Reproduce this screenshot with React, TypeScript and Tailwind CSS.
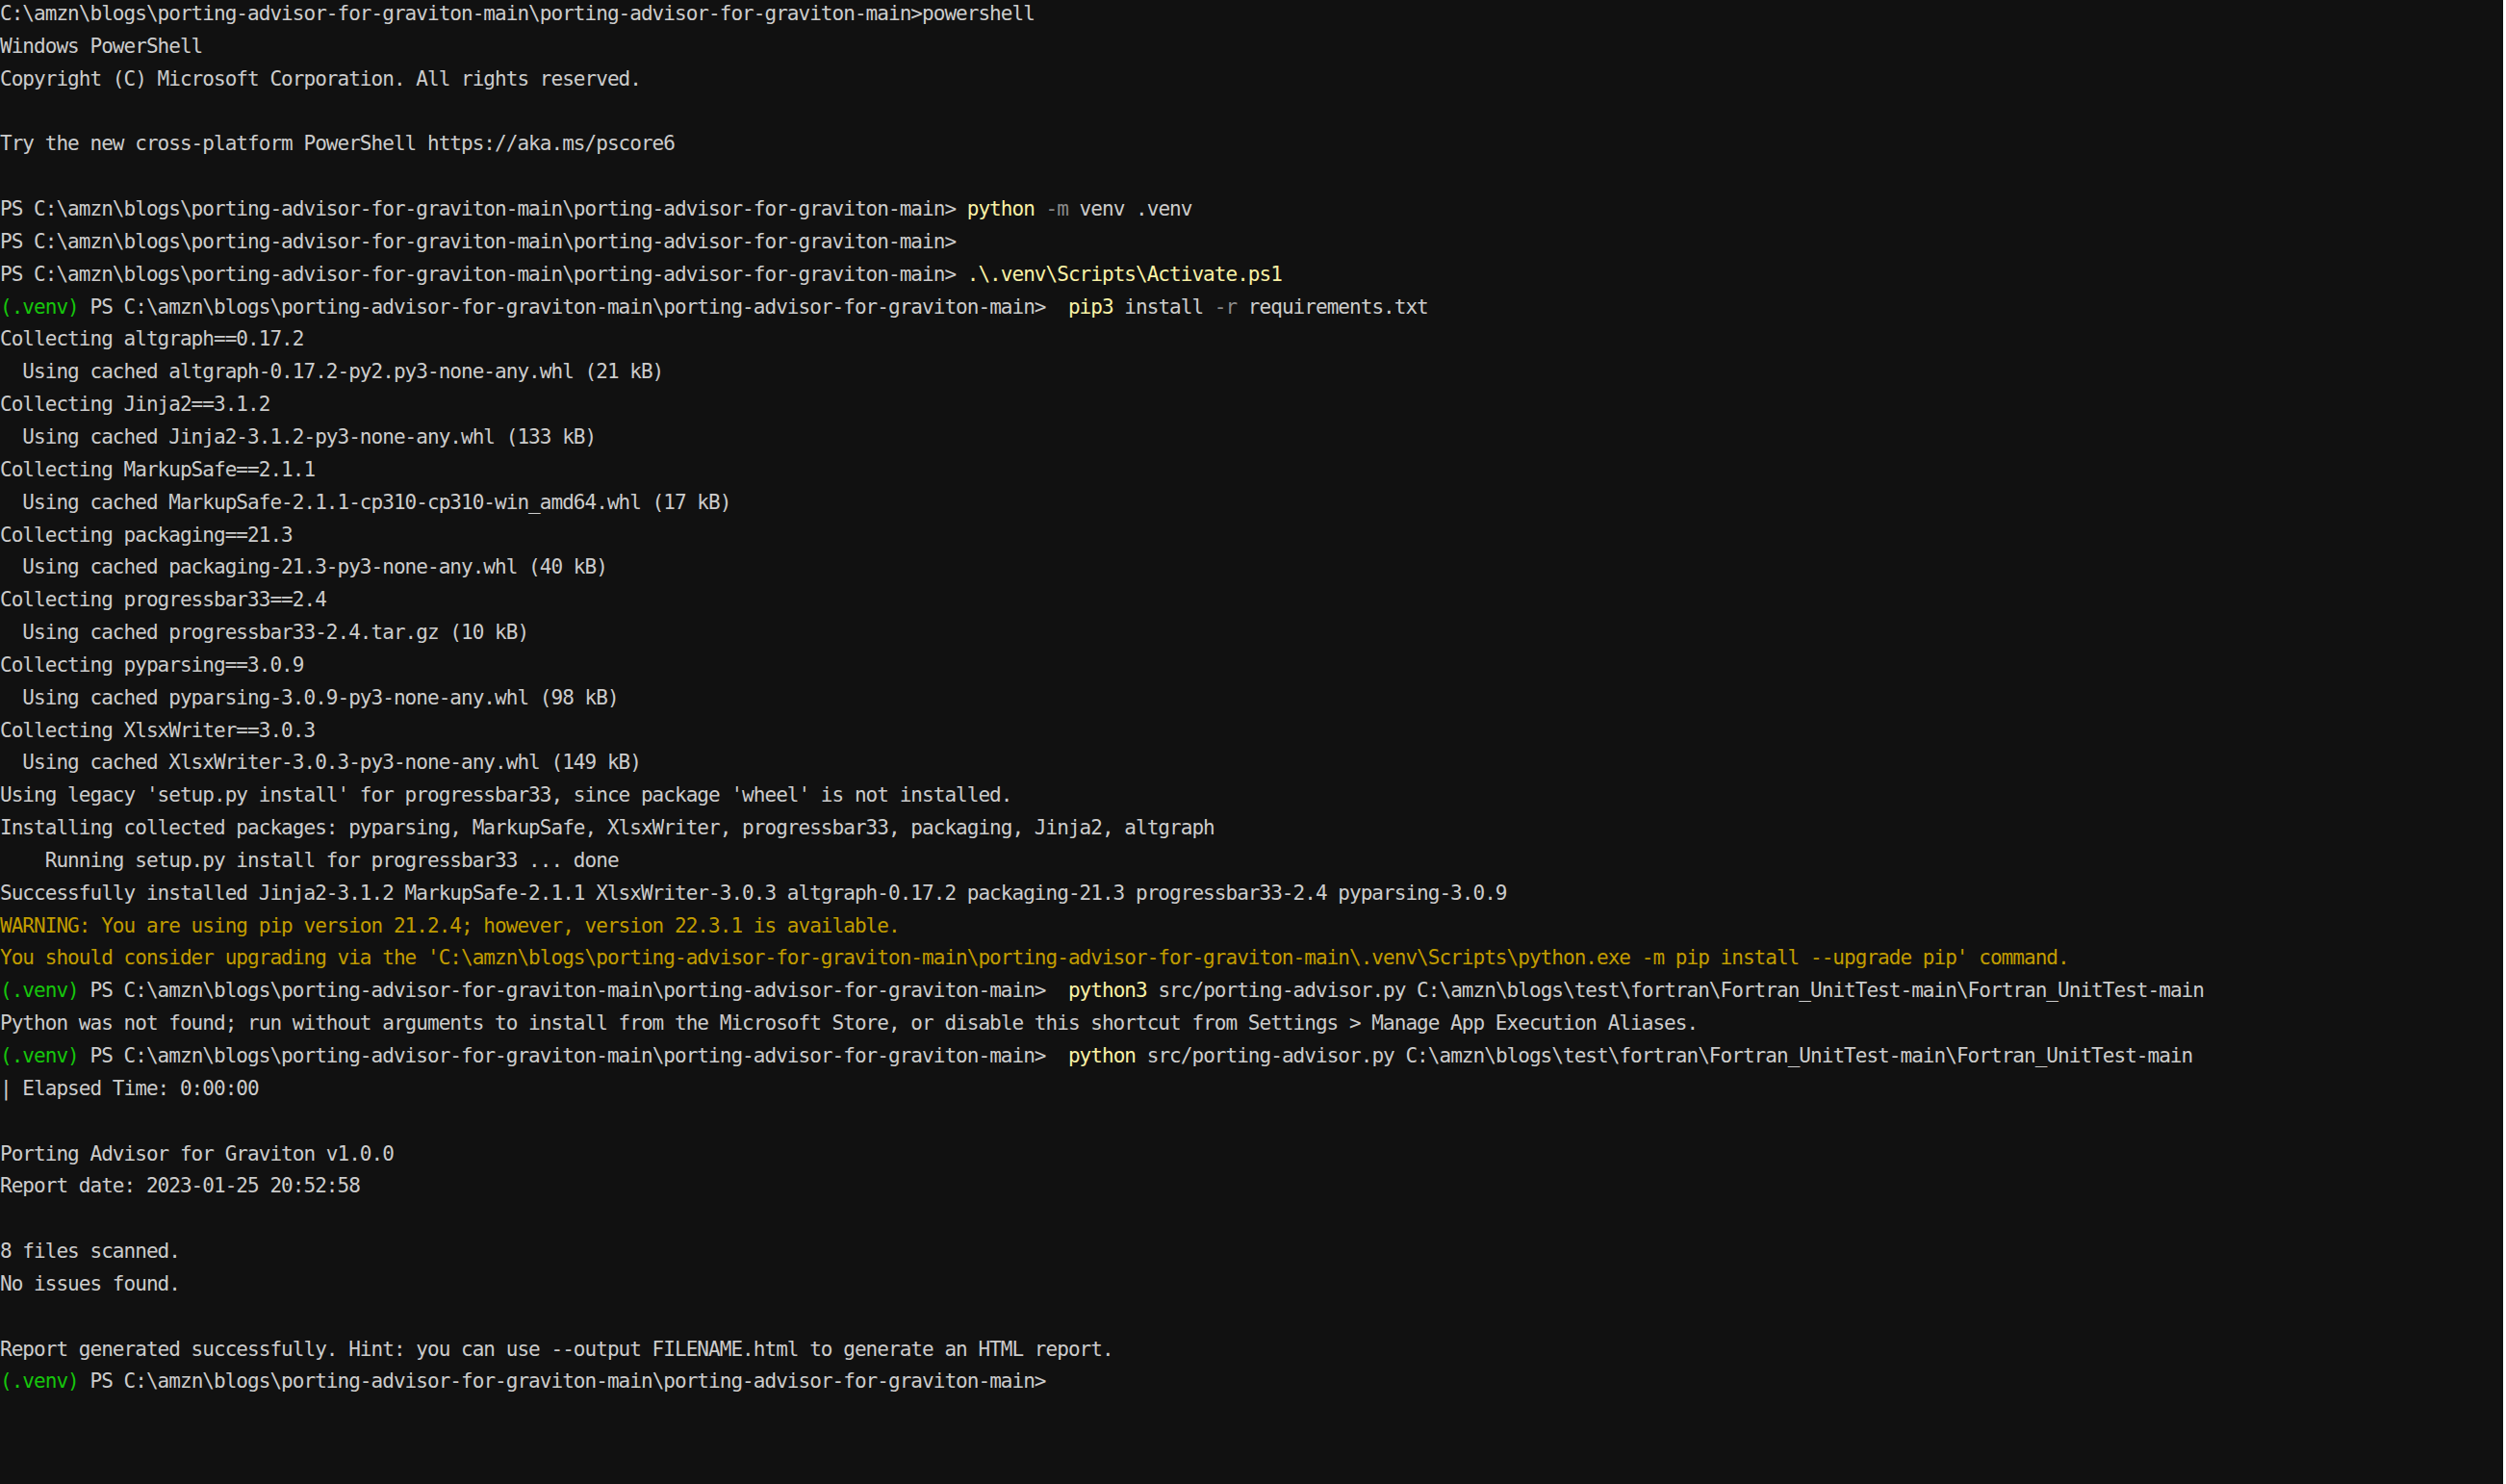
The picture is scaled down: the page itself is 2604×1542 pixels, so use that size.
import React from "react";

type Seg = { t: string; c?: "y" | "g" | "d" | "w" };

const P = "C:\\amzn\\blogs\\porting-advisor-for-graviton-main\\porting-advisor-for-graviton-main>";
const FT = "C:\\amzn\\blogs\\test\\fortran\\Fortran_UnitTest-main\\Fortran_UnitTest-main";

const lines: Seg[][] = [
  [{ t: P + "powershell" }],
  [{ t: "Windows PowerShell" }],
  [{ t: "Copyright (C) Microsoft Corporation. All rights reserved." }],
  [],
  [{ t: "Try the new cross-platform PowerShell https://aka.ms/pscore6" }],
  [],
  [{ t: "PS " + P + " " }, { t: "python", c: "y" }, { t: " -m", c: "d" }, { t: " venv .venv" }],
  [{ t: "PS " + P }],
  [{ t: "PS " + P + " " }, { t: ".\\.venv\\Scripts\\Activate.ps1", c: "y" }],
  [{ t: "(.venv)", c: "g" }, { t: " PS " + P + "  " }, { t: "pip3", c: "y" }, { t: " install " }, { t: "-r", c: "d" }, { t: " requirements.txt" }],
  [{ t: "Collecting altgraph==0.17.2" }],
  [{ t: "  Using cached altgraph-0.17.2-py2.py3-none-any.whl (21 kB)" }],
  [{ t: "Collecting Jinja2==3.1.2" }],
  [{ t: "  Using cached Jinja2-3.1.2-py3-none-any.whl (133 kB)" }],
  [{ t: "Collecting MarkupSafe==2.1.1" }],
  [{ t: "  Using cached MarkupSafe-2.1.1-cp310-cp310-win_amd64.whl (17 kB)" }],
  [{ t: "Collecting packaging==21.3" }],
  [{ t: "  Using cached packaging-21.3-py3-none-any.whl (40 kB)" }],
  [{ t: "Collecting progressbar33==2.4" }],
  [{ t: "  Using cached progressbar33-2.4.tar.gz (10 kB)" }],
  [{ t: "Collecting pyparsing==3.0.9" }],
  [{ t: "  Using cached pyparsing-3.0.9-py3-none-any.whl (98 kB)" }],
  [{ t: "Collecting XlsxWriter==3.0.3" }],
  [{ t: "  Using cached XlsxWriter-3.0.3-py3-none-any.whl (149 kB)" }],
  [{ t: "Using legacy 'setup.py install' for progressbar33, since package 'wheel' is not installed." }],
  [{ t: "Installing collected packages: pyparsing, MarkupSafe, XlsxWriter, progressbar33, packaging, Jinja2, altgraph" }],
  [{ t: "    Running setup.py install for progressbar33 ... done" }],
  [{ t: "Successfully installed Jinja2-3.1.2 MarkupSafe-2.1.1 XlsxWriter-3.0.3 altgraph-0.17.2 packaging-21.3 progressbar33-2.4 pyparsing-3.0.9" }],
  [{ t: "WARNING: You are using pip version 21.2.4; however, version 22.3.1 is available.", c: "w" }],
  [{ t: "You should consider upgrading via the 'C:\\amzn\\blogs\\porting-advisor-for-graviton-main\\porting-advisor-for-graviton-main\\.venv\\Scripts\\python.exe -m pip install --upgrade pip' command.", c: "w" }],
  [{ t: "(.venv)", c: "g" }, { t: " PS " + P + "  " }, { t: "python3", c: "y" }, { t: " src/porting-advisor.py " + FT }],
  [{ t: "Python was not found; run without arguments to install from the Microsoft Store, or disable this shortcut from Settings > Manage App Execution Aliases." }],
  [{ t: "(.venv)", c: "g" }, { t: " PS " + P + "  " }, { t: "python", c: "y" }, { t: " src/porting-advisor.py " + FT }],
  [{ t: "| Elapsed Time: 0:00:00" }],
  [],
  [{ t: "Porting Advisor for Graviton v1.0.0" }],
  [{ t: "Report date: 2023-01-25 20:52:58" }],
  [],
  [{ t: "8 files scanned." }],
  [{ t: "No issues found." }],
  [],
  [{ t: "Report generated successfully. Hint: you can use --output FILENAME.html to generate an HTML report." }],
  [{ t: "(.venv)", c: "g" }, { t: " PS " + P }],
];

function segClass(c?: Seg["c"]) {
  if (c === "y") return "text-[#f9f1a5]";
  if (c === "g") return "text-[#16c60c]";
  if (c === "d") return "text-[#8a8a8a]";
  if (c === "w") return "text-[#c19c00]";
  return "";
}

export default function App() {
  return (
    <div className="flex w-full h-[1542px] bg-white overflow-hidden">
      <div className="flex-1 h-full bg-[#111111] text-[#cccccc] overflow-hidden">
        <div className="-mt-[2px] font-['DejaVu_Sans_Mono','Liberation_Mono',monospace] text-[21px] leading-[33.85px] tracking-[-0.96px] whitespace-pre">
          {lines.map((segs, i) => (
            <div key={i} className="h-[33.85px]">
              {segs.length === 0 ? " " : segs.map((s, j) => (
                <span key={j} className={segClass(s.c)}>{s.t}</span>
              ))}
            </div>
          ))}
        </div>
      </div>
      <div className="w-[3px] h-full bg-white" />
    </div>
  );
}
